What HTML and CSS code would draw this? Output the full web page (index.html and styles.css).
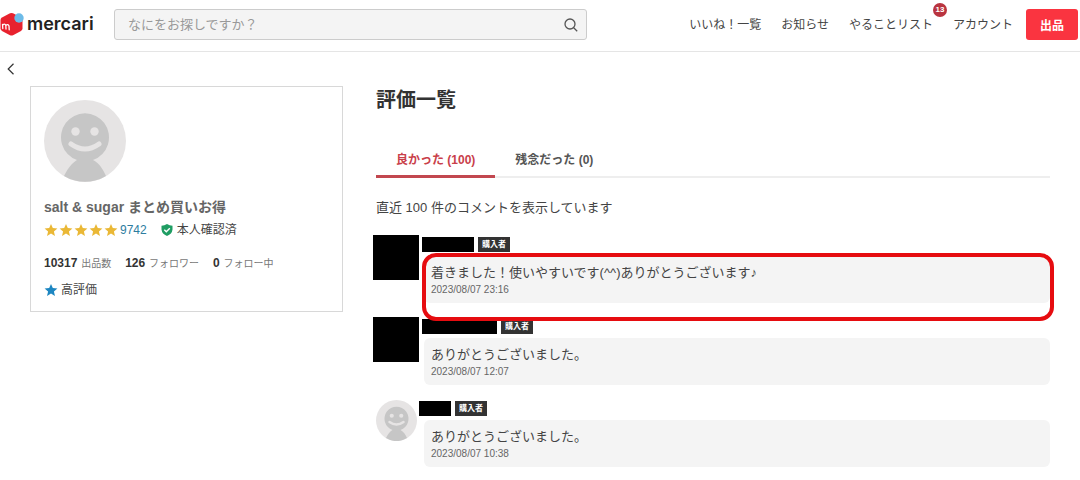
FILE: index.html
```html
<!DOCTYPE html>
<html lang="ja">
<head>
<meta charset="utf-8">
<meta name="viewport" content="width=device-width, initial-scale=1">
<title>評価一覧 - mercari</title>
<link rel="stylesheet" href="styles.css">
</head>
<body>
<svg class="defs" width="0" height="0" aria-hidden="true">
  <symbol id="star" viewBox="0 0 24 24"><path d="M12 1.500l3.100 7.200 7.900.7-6 5.200 1.800 7.700L12 18.200l-6.800 4.100L7 14.600l-6-5.200 7.900-.7z"/></symbol>
  <symbol id="face" viewBox="0 0 82 82">
    <circle cx="41" cy="41" r="41" fill="#e6e4e4"/>
    <path d="M20 76C24 68 28 63 33 60A24 24 0 1 1 49 60C55 63 59 69 62 76A41 41 0 0 1 20 76Z" fill="#c6c6c6"/>
    <circle cx="31.500" cy="31.500" r="4.200" fill="#e6e4e4"/>
    <circle cx="50.500" cy="31.500" r="4.200" fill="#e6e4e4"/>
    <path d="M27 44Q41 54 55 44" fill="none" stroke="#e6e4e4" stroke-width="5" stroke-linecap="round"/>
  </symbol>
</svg>

<header class="header">
  <a class="logo" href="#">
    <svg class="logo-mark" viewBox="0 0 24 24" aria-hidden="true">
      <path d="M10 1.300Q11.500.500 13 1.300L21 5.600Q22.500 6.500 22.500 8V16.500Q22.500 18 21 18.900L13 23.200Q11.500 24 10 23.200L2 18.900Q.500 18 .500 16.500V8Q.500 6.500 2 5.600Z" fill="#e8222e"/>
      <circle cx="19" cy="6" r="4.700" fill="#6dbbe8"/>
      <path d="M2.800 16.500L2.500 12.300M2.600 13.300Q4.800 11 5.800 13.300L6 17M5.800 13.500Q8 11.500 9 14L9.200 17.800" fill="none" stroke="#fff" stroke-width="1.300" stroke-linecap="round"/>
    </svg>
    <span>mercari</span>
  </a>
  <form class="search" role="search">
    <input class="search-input" type="text" aria-label="検索" placeholder="なにをお探しですか？">
    <button class="search-button" type="button" aria-label="検索する">
      <svg viewBox="0 0 14 14" width="14" height="14" aria-hidden="true"><circle cx="6" cy="6" r="5" /><path d="M9.700 9.700L13.200 13.200"/></svg>
    </button>
  </form>
  <nav class="nav">
    <a href="#">いいね！一覧</a>
    <a href="#">お知らせ</a>
    <a class="todo" href="#">やることリスト<span class="count">13</span></a>
    <a href="#">アカウント</a>
  </nav>
  <button class="sell" type="button">出品</button>
</header>

<div class="crumb">
  <a class="back" href="#" aria-label="戻る"><svg viewBox="0 0 8 12" width="8" height="12" aria-hidden="true"><path d="M6.500.800L1.200 6L6.500 11.200"/></svg></a>
</div>

<div class="page">
  <aside class="profile">
    <svg class="profile-face" role="img" aria-label="プロフィール画像"><use href="#face"/></svg>
    <h2 class="profile-name">salt &amp; sugar まとめ買いお得</h2>
    <div class="rating">
      <span class="stars">
        <svg><use href="#star"/></svg><svg><use href="#star"/></svg><svg><use href="#star"/></svg><svg><use href="#star"/></svg><svg><use href="#star"/></svg>
      </span>
      <a class="rating-count" href="#">9742</a>
      <svg class="shield" viewBox="0 0 12 12" aria-hidden="true"><path d="M6 0Q8.500 1.600 11.500 1.800V5.500Q11 10 6 12Q1 10 .500 5.500V1.800Q3.500 1.600 6 0Z" fill="#1f9d63"/><path d="M3.300 5.800L5.300 7.800L8.800 4.200" fill="none" stroke="#fff" stroke-width="1.400"/></svg>
      <span>本人確認済</span>
    </div>
    <div class="stats">
      <span><b>10317</b> 出品数</span>
      <span><b>126</b> フォロワー</span>
      <span><b>0</b> フォロー中</span>
    </div>
    <div class="praise"><svg><use href="#star"/></svg><span>高評価</span></div>
  </aside>

  <main class="reviews">
    <h1 class="title">評価一覧</h1>
    <div class="tabs" role="tablist">
      <button class="tab tab-active" type="button" role="tab" aria-selected="true">良かった (100)</button>
      <button class="tab" type="button" role="tab" aria-selected="false">残念だった (0)</button>
    </div>
    <p class="note">直近 100 件のコメントを表示しています</p>
    <ul class="list">
      <li class="review">
        <span class="avatar"></span>
        <div class="body">
          <div class="who"><span class="mask"></span><span class="badge">購入者</span></div>
          <div class="bubble marked"><p class="text">着きました！使いやすいです(^^)ありがとうございます♪</p><time class="date">2023/08/07 23:16</time></div>
        </div>
      </li>
      <li class="review">
        <span class="avatar"></span>
        <div class="body">
          <div class="who"><span class="mask mask-long"></span><span class="badge">購入者</span></div>
          <div class="bubble"><p class="text">ありがとうございました。</p><time class="date">2023/08/07 12:07</time></div>
        </div>
      </li>
      <li class="review">
        <svg class="avatar-face" aria-hidden="true"><use href="#face"/></svg>
        <div class="body">
          <div class="who who-near"><span class="mask mask-short"></span><span class="badge">購入者</span></div>
          <div class="bubble"><p class="text">ありがとうございました。</p><time class="date">2023/08/07 10:38</time></div>
        </div>
      </li>
    </ul>
  </main>
</div>
</body>
</html>
```
FILE: styles.css
```css
* { box-sizing: border-box; }
body {
  margin: 0;
  background: #fff;
  color: #444;
  font: 12px/16px "Liberation Sans", "Noto Sans CJK JP", sans-serif;
}
a { color: inherit; text-decoration: none; }
button { font-family: inherit; border: 0; padding: 0; cursor: pointer; }
h1, h2, p, ul { margin: 0; padding: 0; }
svg { display: block; flex: none; }
.defs { position: absolute; }

.header {
  display: flex;
  align-items: center;
  height: 52px;
  padding: 0 2px 2px 0;
  border-bottom: 1px solid #e5e5e5;
}
.logo {
  display: flex;
  align-items: center;
  gap: 3px;
  width: 114px;
  padding-bottom: 1px;
  color: #222;
  font: 600 18px/24px Inter, sans-serif;
}
.logo-mark { width: 24px; height: 24px; }
.search {
  display: flex;
  flex: 0 1 473px;
  height: 31px;
  border: 1px solid #ccc;
  border-radius: 3px;
  background: #f4f4f4;
}
.search-input {
  flex: 1;
  min-width: 0;
  padding: 0 13px;
  border: 0;
  background: none;
  font: inherit;
  font-size: 13px;
}
.search-input::placeholder { color: #999; opacity: 1; }
.search-button { display: grid; place-items: center; width: 30px; background: none; }
.search-button svg { fill: none; stroke: #555; stroke-width: 1.3; }
.nav {
  display: flex;
  gap: 20px;
  margin-left: auto;
  margin-right: 13px;
  white-space: nowrap;
}
.todo { position: relative; }
.count {
  position: absolute;
  top: -14px;
  right: -14px;
  width: 14px;
  height: 14px;
  border-radius: 50%;
  background: #b93440;
  color: #fff;
  font-size: 8px;
  font-weight: 700;
  line-height: 14px;
  text-align: center;
}
.sell {
  width: 52px;
  height: 31px;
  border-radius: 3px;
  background: #fa3440;
  color: #fff;
  font-size: 12px;
  font-weight: 700;
}

.crumb { display: flex; height: 34px; padding: 11px 7px; }
.back svg { fill: none; stroke: #333; stroke-width: 1.2; }

.page {
  display: grid;
  grid-template-columns: 313px minmax(0, 1fr);
  align-items: start;
  gap: 33px;
  padding: 0 30px;
}
.profile { padding: 13px; border: 1px solid #d8d8d8; }
.profile-face { width: 82px; height: 82px; }
.profile-name { margin-top: 14px; color: #666; font-size: 14px; line-height: 22px; }
.rating { display: flex; align-items: center; margin-top: 4px; }
.stars { display: flex; gap: 1px; margin-right: 2px; fill: #eab836; }
.stars svg, .praise svg { width: 14px; height: 14px; }
.rating-count { color: #2d7d9f; }
.shield { width: 12px; height: 12px; margin: 0 4px 0 14px; }
.stats { display: flex; gap: 14px; margin-top: 17px; color: #777; font-size: 10px; white-space: nowrap; }
.stats b { margin-right: 1px; color: #333; font-size: 12px; }
.praise { display: flex; align-items: center; gap: 3px; margin-top: 10px; }
.praise svg { fill: #1d86c1; }

.title { color: #333; font-size: 20px; line-height: 28px; }
.tabs { display: flex; margin-top: 32px; border-bottom: 2px solid #eee; }
.tab {
  height: 32px;
  margin-bottom: -2px;
  padding: 0 20px 7px;
  background: none;
  color: #555;
  font-size: 12px;
  font-weight: 700;
}
.tab-active { border-bottom: 3px solid #c2474f; color: #c9404a; padding-bottom: 4px; }
.note { margin-top: 20px; font-size: 13px; line-height: 20px; }

.list { display: grid; gap: 14px; margin-top: 17px; margin-left: -3px; list-style: none; }
.review { display: flex; }
.avatar { flex: none; width: 46px; height: 45px; background: #000; }
.avatar-face { width: 41px; height: 41px; margin: 1px 2px 0 3px; }
.body { flex: 1; min-width: 0; padding: 2px 0 0 5px; }
.who { display: flex; gap: 4px; height: 15px; margin-left: -2px; }
.who-near { margin-left: -5px; }
.mask { width: 52px; background: #000; }
.mask-long { width: 75px; }
.mask-short { width: 32px; }
.badge {
  padding: 0 4px;
  background: #333;
  color: #fff;
  font-size: 8px;
  font-weight: 700;
  line-height: 15px;
}
.bubble {
  position: relative;
  margin-top: 4px;
  padding: 8px 7px 6px;
  border-radius: 6px;
  background: #f4f4f4;
}
.text { font-size: 13px; line-height: 18px; }
.date { display: block; color: #666; font-size: 10px; line-height: 15px; }
.marked::after {
  content: "";
  position: absolute;
  inset: -3px -4px -18px -2px;
  border: 4px solid #e60c10;
  border-radius: 14px;
}
```
